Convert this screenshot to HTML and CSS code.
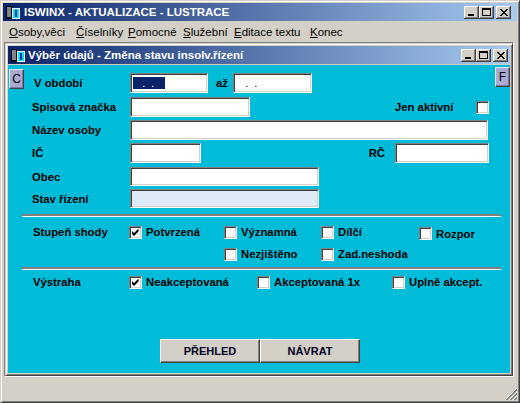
FILE: index.html
```html
<!DOCTYPE html>
<html lang="cs">
<head>
<meta charset="utf-8">
<title>ISWINX</title>
<link rel="stylesheet" href="styles.css">
</head>
<body>
<div class="win">
  <div class="title">
    <svg class="ticon" width="14" height="13" viewBox="0 0 14 13">
      <rect x="0" y="0" width="6" height="13" fill="#000814"/>
      <path d="M1 2h4M1 4h4M1 6h4M1 8h4M1 10h4" stroke="#fff" stroke-width="1"/>
      <rect x="6.5" y="2.5" width="7" height="10" fill="#00e0f8" stroke="#fff"/>
      <rect x="9" y="4" width="2" height="7" fill="#1030a0"/>
    </svg>
    <span class="ttext">ISWINX - AKTUALIZACE - LUSTRACE</span>
    <div class="cbtns">
      <span class="cbtn"><svg width="15" height="13" viewBox="0 0 15 13"><rect x="4" y="8" width="6" height="2" fill="#000"/></svg></span>
      <span class="cbtn"><svg width="15" height="13" viewBox="0 0 15 13"><rect x="3.5" y="2.5" width="8" height="7" fill="none" stroke="#000"/><rect x="3" y="2" width="9" height="2" fill="#000"/></svg></span>
      <span class="cbtn close"><svg width="15" height="13" viewBox="0 0 15 13"><path d="M4 3l7 7M5 3l7 7M11 3l-7 7M12 3l-7 7" stroke="#000" stroke-width="1"/></svg></span>
    </div>
  </div>
  <div class="menu">
    <span class="mi m1"><u>O</u>soby,věci</span>
    <span class="mi m2"><u>Č</u>íselníky</span>
    <span class="mi m3"><u>P</u>omocné</span>
    <span class="mi m4"><u>S</u>lužební</span>
    <span class="mi m5"><u>E</u>ditace textu</span>
    <span class="mi"><u>K</u>onec</span>
  </div>
  <div class="mdi">
    <div class="child">
      <div class="title ctitle">
        <svg class="ticon" width="14" height="13" viewBox="0 0 14 13">
          <rect x="0" y="0" width="6" height="13" fill="#000814"/>
          <path d="M1 2h4M1 4h4M1 6h4M1 8h4M1 10h4" stroke="#fff" stroke-width="1"/>
          <rect x="6.5" y="2.5" width="7" height="10" fill="#00e0f8" stroke="#fff"/>
          <rect x="9" y="4" width="2" height="7" fill="#1030a0"/>
        </svg>
        <span class="ttext">Výběr údajů - Změna stavu insolv.řízení</span>
        <div class="cbtns cbtns-child">
          <span class="cbtn"><svg width="15" height="13" viewBox="0 0 15 13"><rect x="4" y="8" width="6" height="2" fill="#000"/></svg></span>
          <span class="cbtn"><svg width="15" height="13" viewBox="0 0 15 13"><rect x="3.5" y="2.5" width="8" height="7" fill="none" stroke="#000"/><rect x="3" y="2" width="9" height="2" fill="#000"/></svg></span>
          <span class="cbtn close"><svg width="15" height="13" viewBox="0 0 15 13"><path d="M4 3l7 7M5 3l7 7M11 3l-7 7M12 3l-7 7" stroke="#000" stroke-width="1"/></svg></span>
        </div>
      </div>
      <div class="client">
        <span class="tbtn tbtn-c">C</span>
        <span class="tbtn tbtn-f">F</span>
        <div class="form">
          <div class="row">
            <span class="lbl lbl-first">V období</span>
            <span class="inp w78"><span class="sel">   .  .</span></span>
            <span class="az">až</span>
            <span class="inp w79"><span class="dots">   .  .</span></span>
          </div>
          <div class="row mt4">
            <span class="lbl">Spisová značka</span>
            <span class="inp w120"></span>
            <span class="jen">Jen aktivní</span>
            <span class="cb"></span>
          </div>
          <div class="row mt3">
            <span class="lbl">Název osoby</span>
            <span class="inp w358"></span>
          </div>
          <div class="row mt3">
            <span class="lbl">IČ</span>
            <span class="inp w71"></span>
            <span class="rc">RČ</span>
            <span class="inp w94"></span>
          </div>
          <div class="row h19 mt4">
            <span class="lbl">Obec</span>
            <span class="inp w189"></span>
          </div>
          <div class="row h19 mt3">
            <span class="lbl">Stav řízení</span>
            <span class="inp w189 ro"></span>
          </div>
          <div class="sep sep1"></div>
          <div class="crow mt5">
            <span class="clbl">Stupeň shody</span>
            <span class="ci c95"><span class="cb"><svg width="11" height="11" viewBox="0 0 11 11"><path d="M2 4l2 2 4.5-4.5v3l-4.5 4.5-2-2z" fill="#000"/></svg></span>Potvrzená</span>
            <span class="ci c97"><span class="cb"></span>Významná</span>
            <span class="ci c98"><span class="cb"></span>Dílčí</span>
            <span class="ci low"><span class="cb"></span>Rozpor</span>
          </div>
          <div class="crow mt2">
            <span class="clbl"></span>
            <span class="ci c95"></span>
            <span class="ci c97"><span class="cb"></span>Nezjištěno</span>
            <span class="ci"><span class="cb"></span>Zad.neshoda</span>
          </div>
          <div class="sep mt3"></div>
          <div class="crow mt2">
            <span class="clbl">Výstraha</span>
            <span class="ci c128"><span class="cb"><svg width="11" height="11" viewBox="0 0 11 11"><path d="M2 4l2 2 4.5-4.5v3l-4.5 4.5-2-2z" fill="#000"/></svg></span>Neakceptovaná</span>
            <span class="ci c135"><span class="cb"></span>Akceptovaná 1x</span>
            <span class="ci"><span class="cb"></span>Uplně akcept.</span>
          </div>
          <div class="btns">
            <span class="btn">PŘEHLED</span>
            <span class="btn">NÁVRAT</span>
          </div>
        </div>
      </div>
    </div>
  </div>
  <div class="status">
    <svg class="grip" width="12" height="12" viewBox="0 0 12 12">
      <path d="M12 0L0 12" stroke="#fff"/>
      <path d="M12 1L1 12M12 2L2 12" stroke="#808080"/>
      <path d="M12 4L4 12" stroke="#fff"/>
      <path d="M12 5L5 12M12 6L6 12" stroke="#808080"/>
      <path d="M12 8L8 12" stroke="#fff"/>
      <path d="M12 9L9 12M12 10L10 12" stroke="#808080"/>
    </svg>
  </div>
</div>
</body>
</html>
```

FILE: styles.css
```css
* { box-sizing: border-box; }
html, body { margin: 0; padding: 0; }
body {
  width: 520px;
  height: 403px;
  overflow: hidden;
  background: #d4d0c8;
  font-family: "Liberation Sans", Arial, sans-serif;
  font-size: 11px;
  color: #000;
}
.win {
  width: 520px;
  height: 403px;
  background: #d4d0c8;
  border: 1px solid;
  border-color: #d4d0c8 #404040 #404040 #d4d0c8;
  box-shadow: inset 1px 1px #fff, inset -1px -1px #808080;
  padding: 2px;
  display: flex;
  flex-direction: column;
}
.title {
  height: 18px;
  flex: none;
  display: flex;
  align-items: center;
  padding-left: 3px;
  background: linear-gradient(to right, #0a246a, #a6caf0);
  color: #fff;
  font-weight: bold;
  font-size: 11.5px;
}
.ticon { flex: none; margin-right: 4px; }
.ctitle .ticon { margin-right: 3px; }
.ttext { white-space: nowrap; }
.cbtns {
  margin-left: auto;
  margin-right: 6px;
  display: flex;
}
.cbtns-child { margin-right: 2px; }
.cbtn {
  width: 15px;
  height: 13px;
  background: #d4d0c8;
  box-shadow: inset -1px -1px #404040, inset 1px 1px #fff, inset -2px -2px #808080;
  display: block;
}
.cbtn svg { display: block; }
.cbtn.close { margin-left: 2px; }
.menu {
  height: 21px;
  flex: none;
  display: flex;
  align-items: center;
  padding-left: 6px;
  font-size: 11.5px;
}
.mi { white-space: nowrap; }
.m1 { width: 67px; }
.m2 { width: 52px; }
.m3 { width: 55px; }
.m4 { width: 51px; }
.m5 { width: 76px; }
.mdi {
  height: 335px;
  flex: none;
  width: 510px;
  margin-left: 1px;
  border: 1px solid;
  border-color: #808080 #fff #fff #808080;
}
.child {
  width: 508px;
  height: 333px;
  background: #d4d0c8;
  border: 1px solid;
  border-color: #d4d0c8 #404040 #404040 #d4d0c8;
  box-shadow: inset 1px 1px #fff, inset -1px -1px #808080;
  padding: 2px;
}
.client {
  margin-top: 1px;
  height: 308px;
  background: #00bcd9;
  position: relative;
  font-size: 11.3px;
}
.tbtn {
  position: absolute;
  width: 15px;
  height: 20px;
  background: #ababd2;
  border: 1px solid;
  border-color: #e4e4f0 #404040 #404040 #e4e4f0;
  box-shadow: inset -1px -1px #7878a0;
  display: flex;
  align-items: flex-start;
  justify-content: center;
  padding-top: 2px;
  font-size: 12px;
  color: #000;
}
.tbtn-c { left: 1px; top: 4px; }
.tbtn-f { right: 0; top: 2px; }
.form { padding-top: 8px; }
.row {
  display: flex;
  align-items: center;
  height: 20px;
}
.h19 { height: 19px; }
.mt2 { margin-top: 2px; }
.mt3 { margin-top: 3px; }
.mt4 { margin-top: 4px; }
.mt5 { margin-top: 5px; }
.lbl {
  width: 122px;
  flex: none;
  padding-left: 24px;
  font-weight: bold;
  color: #000;
}
.lbl-first { padding-left: 26px; }
.inp {
  height: 100%;
  flex: none;
  background: #fff;
  border: 1px solid;
  border-color: #808080 #fff #fff #808080;
  box-shadow: inset 1px 1px #404040, inset -1px -1px #d4d0c8;
  display: flex;
  align-items: center;
  font-size: 11px;
}
.ro { background: #dee9f6; }
.w71 { width: 71px; }
.w78 { width: 78px; }
.w79 { width: 79px; }
.w94 { width: 94px; }
.w120 { width: 120px; }
.w189 { width: 189px; }
.w358 { width: 358px; }
.sel {
  margin-left: 2px;
  width: 32px;
  height: 12px;
  background: #0a246a;
  color: #fff;
  white-space: pre;
  line-height: 12px;
}
.dots {
  margin-left: 2px;
  white-space: pre;
  color: #000;
}
.az {
  width: 25px;
  flex: none;
  padding-left: 8px;
  font-weight: bold;
}
.jen {
  width: 81px;
  flex: none;
  margin-left: 145px;
  font-weight: bold;
}
.rc {
  width: 194px;
  flex: none;
  text-align: right;
  padding-right: 10px;
  font-weight: bold;
}
.cb {
  width: 13px;
  height: 13px;
  flex: none;
  background: #fff;
  border: 1px solid;
  border-color: #808080 #fff #fff #808080;
  box-shadow: inset 1px 1px #404040, inset -1px -1px #d4d0c8;
  display: block;
}
.cb svg { display: block; }
.sep {
  margin-left: 14px;
  width: 479px;
  height: 3px;
  border-top: 2px solid #808080;
  border-bottom: 1px solid #fff;
}
.sep1 { margin-top: 6px; }
.crow {
  display: flex;
  align-items: center;
  height: 20px;
}
.clbl {
  width: 121px;
  flex: none;
  padding-left: 25px;
  font-weight: bold;
}
.ci {
  display: flex;
  align-items: center;
  gap: 4px;
  font-weight: bold;
  flex: none;
  white-space: nowrap;
}
.c95 { width: 95px; }
.c97 { width: 97px; }
.c98 { width: 98px; }
.c128 { width: 128px; }
.c135 { width: 135px; }
.low { margin-top: 3px; }
.btns {
  display: flex;
  padding-left: 152px;
  margin-top: 47px;
}
.btn {
  width: 100px;
  height: 24px;
  background: #d4d0c8;
  border: 1px solid;
  border-color: #fff #404040 #404040 #fff;
  box-shadow: inset -1px -1px #808080;
  display: flex;
  align-items: center;
  justify-content: center;
  font-weight: bold;
  font-size: 11px;
  color: #000020;
}
.status {
  flex: 1;
  position: relative;
}
.grip {
  position: absolute;
  right: 0;
  bottom: 0;
}
```
